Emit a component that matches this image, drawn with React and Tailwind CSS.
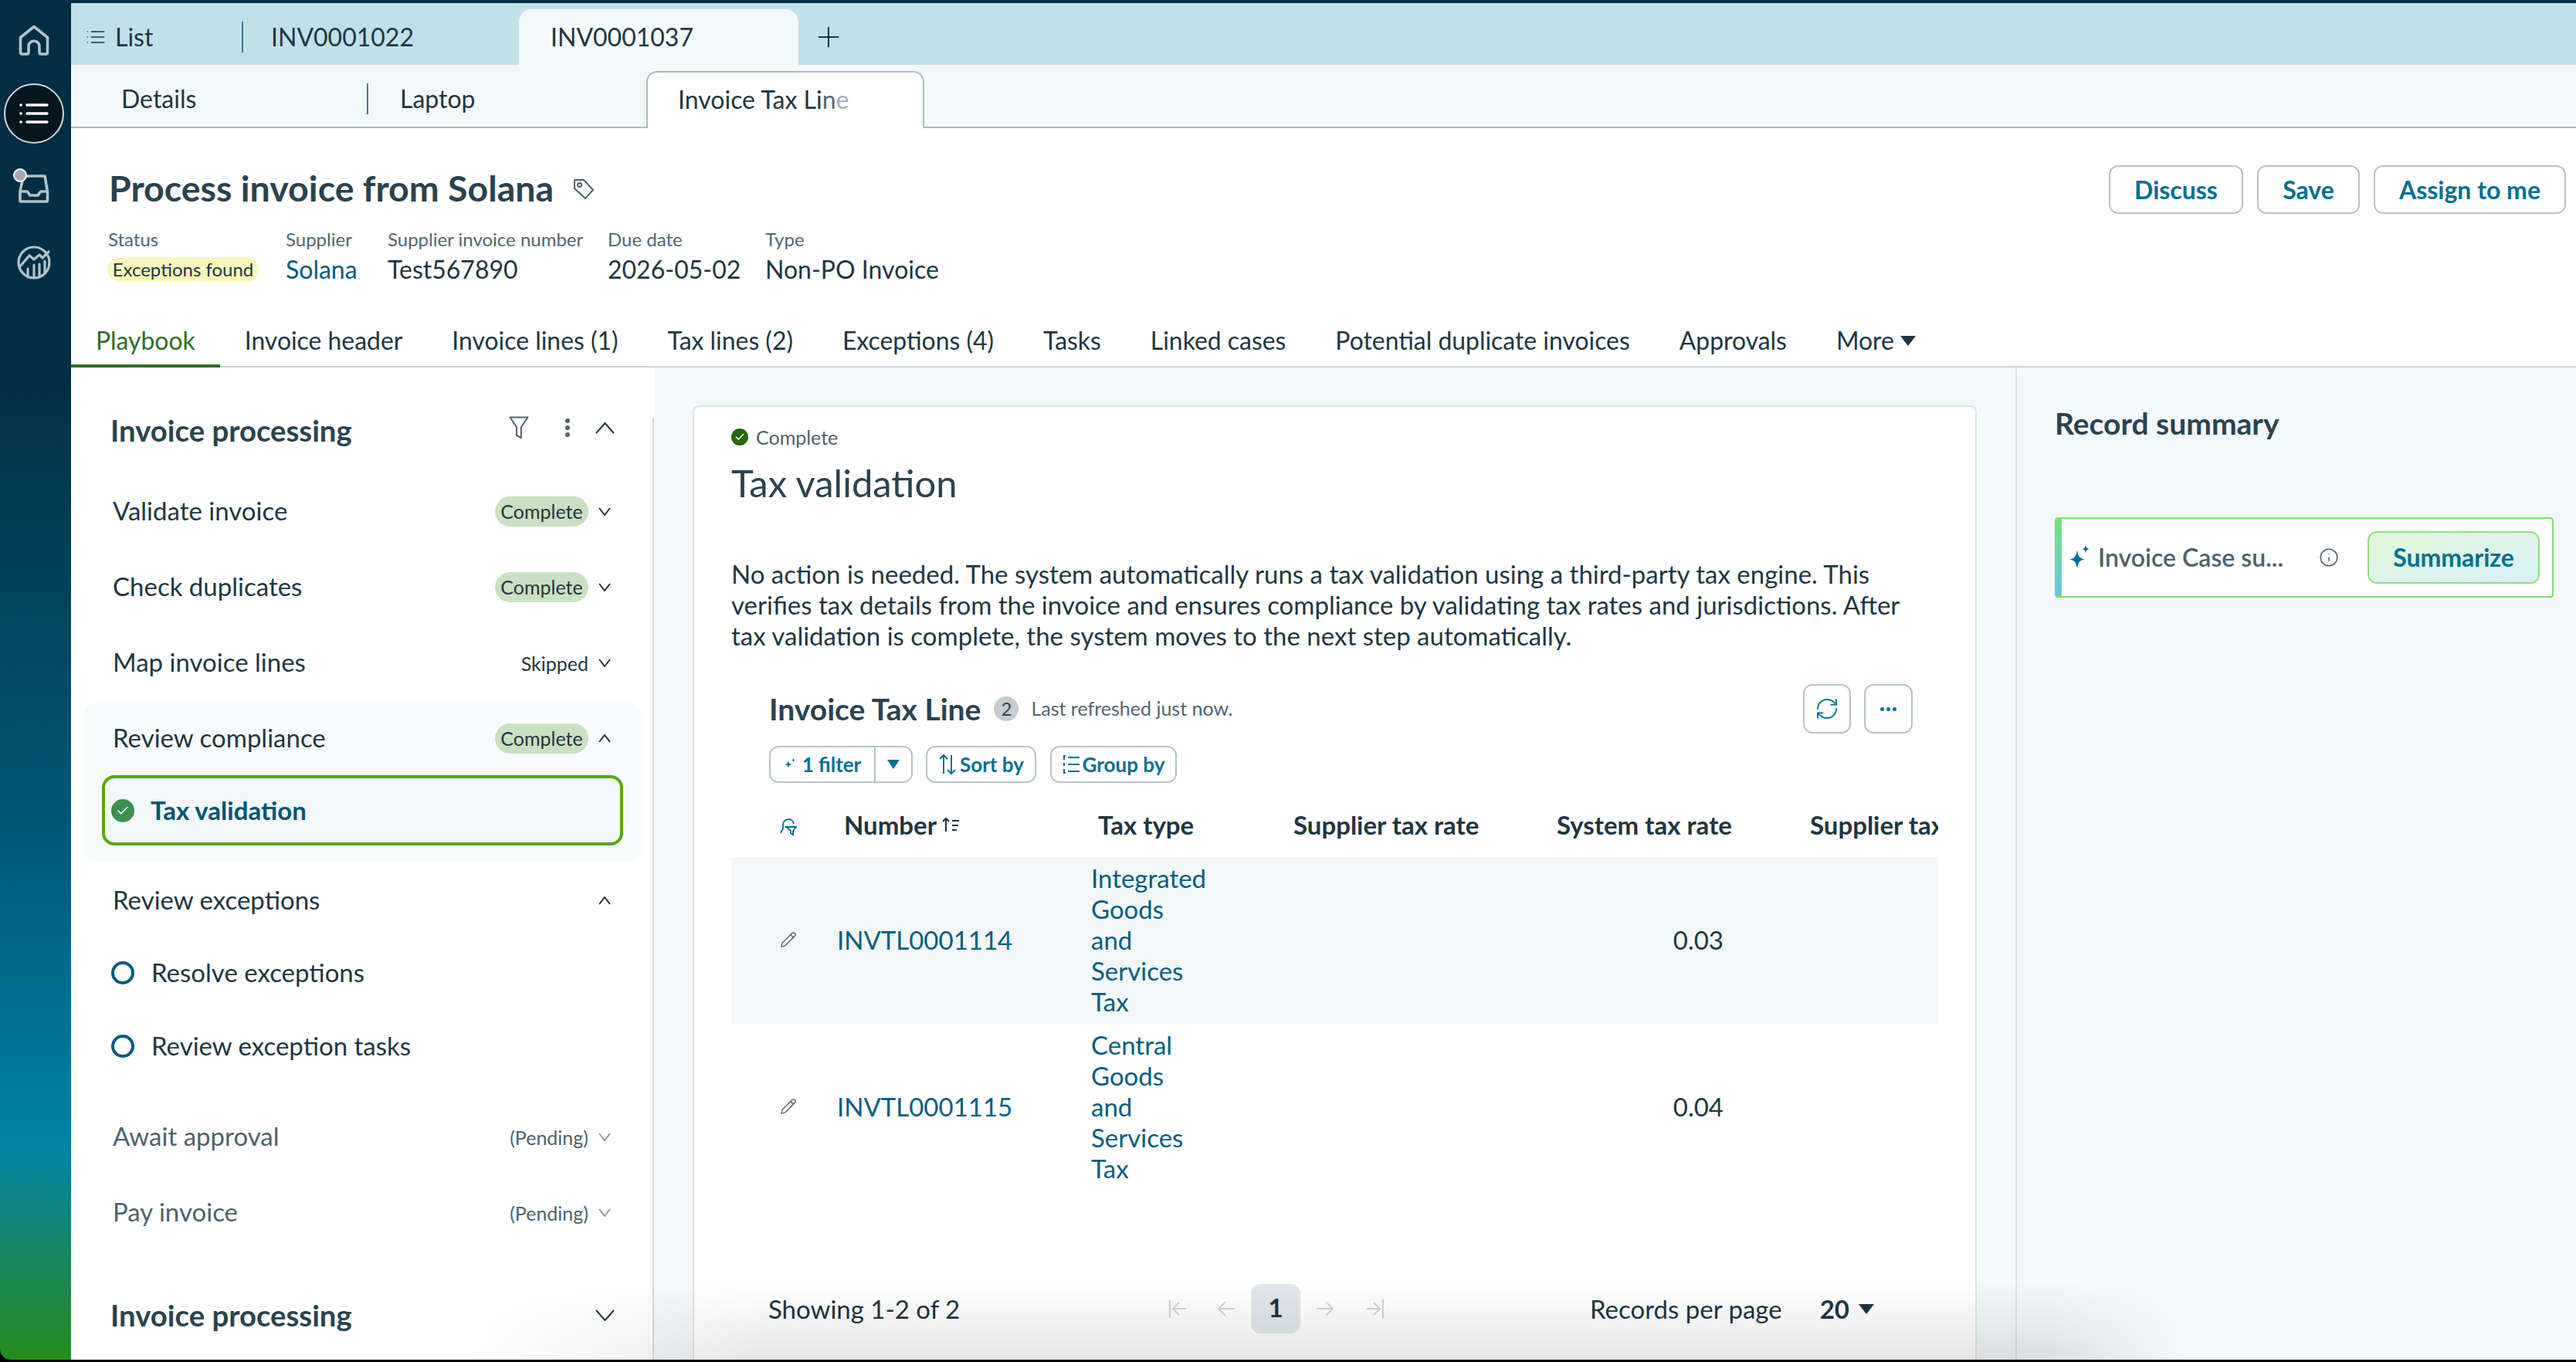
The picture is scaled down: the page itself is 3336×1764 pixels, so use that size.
import React from "react";
import { Plus, Check, RefreshCw, Info, Pencil } from "lucide-react";

const ICON = "#b3c3c8";

function HomeIcon() {
  return (
    <svg width="40" height="40" viewBox="0 0 40 40" fill="none" stroke={ICON} strokeWidth="3.6" strokeLinejoin="round">
      <path d="M2.500 16.500 20 2.500l17.500 14V36a2 2 0 0 1-2 2h-6.500a2 2 0 0 1-2-2v-8a7 7 0 0 0-14 0v8a2 2 0 0 1-2 2H4.500a2 2 0 0 1-2-2z" />
    </svg>
  );
}

function ListLines({ w = 38, h = 26, color = "white", sw = 3.6 }) {
  return (
    <svg width={w} height={h} viewBox="0 0 38 26" fill="none" stroke={color} strokeWidth={sw} strokeLinecap="round">
      <path d="M10 2h26M10 13h26M10 24h26" />
      <path d="M2 2h.1M2 13h.1M2 24h.1" />
    </svg>
  );
}

function InboxIcon() {
  return (
    <div className="relative w-[40px] h-[37px]">
      <svg width="40" height="37" viewBox="0 0 40 37" fill="none" stroke={ICON} strokeWidth="3.6" strokeLinejoin="round">
        <path d="M6 2h28l3.500 20v12a1 1 0 0 1-1 1H3a1 1 0 0 1-1-1V22z" />
        <path d="M2 22h9c2 0 2 5 5 5h8c3 0 3-5 5-5h9" />
      </svg>
      <div className="absolute -left-[7px] -top-[8px] w-[18px] h-[18px] rounded-full bg-[#a9a8b6] border-2 border-white" />
    </div>
  );
}

function ChartIcon() {
  return (
    <svg width="44" height="44" viewBox="0 0 44 44" fill="none" stroke={ICON} strokeWidth="3.200" strokeLinecap="round" strokeLinejoin="round">
      <circle cx="22" cy="22" r="20" />
      <path d="M4 27 16 13l6 5 7-6 4 4 8-8" />
      <path d="M14 41V30M22 42V25M29 41V24M36 35V20" />
    </svg>
  );
}

function Chevron({ up, big, color = "#1f3640" }) {
  const w = big ? 25 : 16;
  const h = big ? 15 : 11;
  return (
    <svg width={w} height={h} viewBox={`0 0 ${w} ${h}`} fill="none" stroke={color} strokeWidth="2">
      <path d={up ? `M1 ${h - 1}L${w / 2} 1L${w - 1} ${h - 1}` : `M1 1L${w / 2} ${h - 1}L${w - 1} 1`} />
    </svg>
  );
}

function Pill() {
  return (
    <span className="h-[39px] w-[121px] rounded-full bg-[#c9e1c1] text-[25px] leading-[39px] text-center text-[#1f3640]">
      Complete
    </span>
  );
}

function StepRow({ label, status, open, muted }) {
  return (
    <div className="h-[98px] flex items-center pl-[54px] pr-[56px]">
      <span className={`text-[33px] flex-1 ${muted ? "text-[#4e626b]" : "text-[#1f3640]"}`}>{label}</span>
      {status === "Complete" && <Pill />}
      {status && status !== "Complete" && (
        <span className={`text-[25px] mt-[4px] ${muted ? "text-[#4e626b]" : "text-[#1f3640]"}`}>{status}</span>
      )}
      <span className="w-[29px] flex justify-end">
        <Chevron up={open} color={muted ? "#8a9aa1" : "#1f3640"} />
      </span>
    </div>
  );
}

function Ring() {
  return <span className="w-[30px] h-[30px] rounded-full border-[4px] border-[#005a78] shrink-0" />;
}

function SmallBtn({ className, children }) {
  return (
    <div className={`h-[48px] rounded-[12px] border-2 border-[#b4c5cc] flex items-center justify-center gap-[4px] text-[26px] font-bold text-[#006f8f] ${className}`}>
      {children}
    </div>
  );
}

function Arrow({ kind }) {
  const d = {
    first: "M3 3v24M24 15H8M15 7l-8 8 8 8",
    prev: "M26 15H6M14 6l-9 9 9 9",
    next: "M4 15h20M16 6l9 9-9 9",
    last: "M27 3v24M6 15h16M15 7l8 8-8 8",
  };
  return (
    <svg width="30" height="30" viewBox="0 0 30 30" fill="none" stroke="#cdd5d8" strokeWidth="2">
      <path d={d[kind]} />
    </svg>
  );
}

export default function App() {
  const tabs = ["Invoice header", "Invoice lines (1)", "Tax lines (2)", "Exceptions (4)", "Tasks", "Linked cases", "Potential duplicate invoices", "Approvals"];
  const rows = [
    { id: "INVTL0001114", tax: "Integrated Goods and Services Tax", rate: "0.03", bg: "bg-[#f2f7f7]" },
    { id: "INVTL0001115", tax: "Central Goods and Services Tax", rate: "0.04", bg: "bg-white" },
  ];

  return (
    <div className="relative w-[3336px] h-[1764px] overflow-hidden bg-black flex font-['Lato',sans-serif] text-[32px] text-[#1f3640]">
      {/* left rail */}
      <div className="w-[92px] h-[1761px] rounded-bl-[14px] flex flex-col items-start pt-[32px] pl-[5px] bg-[linear-gradient(180deg,#032d42_0%,#032f44_27%,#005c78_63%,#0082a5_84%,#128578_90%,#268c1c_100%)]">
        <div className="ml-[19px]"><HomeIcon /></div>
        <div className="mt-[36px] w-[78px] h-[78px] rounded-full bg-[#05161f] border-2 border-[#d0d8db] flex items-center justify-center">
          <ListLines />
        </div>
        <div className="mt-[40px] ml-[19px]">
          <InboxIcon />
        </div>
        <div className="mt-[55px] ml-[17px]">
          <ChartIcon />
        </div>
      </div>

      {/* main */}
      <div className="w-[3244px] h-[1761px] flex flex-col pt-[4px] bg-[#032d42]">
        {/* window tabs */}
        <div className="h-[80px] bg-[#c2e0e8] pt-[8px] flex shrink-0">
          <div className="w-[223px] h-[72px] flex items-center pl-[20px]">
            <ListLines w={24} h={18} color="#1f3640" sw={2.4} />
            <span className="ml-[13px] flex-1">List</span>
            <span className="w-[2px] h-[40px] bg-[#2f7f9c]" />
          </div>
          <div className="w-[357px] h-[72px] flex items-center pl-[36px]">INV0001022</div>
          <div className="w-[362px] h-[72px] flex items-center pl-[41px] bg-[#f3f8f9] rounded-t-[16px]">INV0001037</div>
          <div className="h-[72px] flex items-center ml-[18px]">
            <Plus size={42} strokeWidth={1.2} />
          </div>
        </div>

        {/* record tabs */}
        <div className="h-[82px] bg-[#f3f8f9] border-b-2 border-[#a8bbc3] flex shrink-0">
          <div className="w-[385px] h-[80px] flex items-center pl-[65px] pt-[8px]">
            <span className="flex-1">Details</span>
            <span className="w-[2px] h-[40px] bg-[#2f7f9c]" />
          </div>
          <div className="w-[360px] h-[80px] flex items-center pl-[41px] pt-[8px]">Laptop</div>
          <div className="w-[360px] h-[74px] mt-[8px] bg-white border-x-2 border-t-2 border-[#a8bbc3] rounded-t-[14px] flex items-center pl-[39px] pb-[2px]">
            Invoice Tax Li<span className="text-[#566b74]">n</span><span className="text-[#a0aeb4]">e</span>
          </div>
        </div>

        {/* header */}
        <div className="h-[310px] bg-white flex flex-col shrink-0">
          <div className="flex justify-between pl-[49px] pr-[13px] pt-[48px]">
            <div className="flex items-center h-[63px] -mt-[2px]">
              <h1 className="text-[46.5px] font-bold text-[#2a434e]">Process invoice from Solana</h1>
              <svg className="ml-[24px] mt-[2px]" width="30" height="30" viewBox="0 0 30 30" fill="none" stroke="#4e626b" strokeWidth="2" strokeLinejoin="round">
                <path d="M3 3h12l12 13-10 11L3 14z" />
                <circle cx="9.500" cy="9.500" r="2.500" />
              </svg>
            </div>
            <div className="flex gap-[18px] text-[#006f8f] font-bold">
              <div className="h-[63px] w-[174px] rounded-[12px] border-2 border-[#b4c5cc] flex items-center justify-center">Discuss</div>
              <div className="h-[63px] w-[133px] rounded-[12px] border-2 border-[#b4c5cc] flex items-center justify-center">Save</div>
              <div className="h-[63px] w-[249px] rounded-[12px] border-2 border-[#b4c5cc] flex items-center justify-center">Assign to me</div>
            </div>
          </div>

          <div className="flex pl-[48px] mt-[18px]">
            <div className="w-[230px]">
              <div className="text-[24px] leading-[30px] text-[#51666f]">Status</div>
              <div className="h-[40px] mt-[4px] flex items-center">
                <span className="h-[32px] w-[196px] -ml-[1px] rounded-full bg-[#fbf6bd] text-[24px] leading-[32px] text-center">Exceptions found</span>
              </div>
            </div>
            <div className="w-[132px]">
              <div className="text-[24px] leading-[30px] text-[#51666f]">Supplier</div>
              <div className="leading-[40px] mt-[4px] text-[#005e7d]">Solana</div>
            </div>
            <div className="w-[285px]">
              <div className="text-[24px] leading-[30px] text-[#51666f]">Supplier invoice number</div>
              <div className="leading-[40px] mt-[4px]">Test567890</div>
            </div>
            <div className="w-[204px]">
              <div className="text-[24px] leading-[30px] text-[#51666f]">Due date</div>
              <div className="leading-[40px] mt-[4px]">2026-05-02</div>
            </div>
            <div>
              <div className="text-[24px] leading-[30px] text-[#51666f]">Type</div>
              <div className="leading-[40px] mt-[4px]">Non-PO Invoice</div>
            </div>
          </div>

          <div className="mt-auto flex h-[64px] border-b-2 border-[#c8d6dc] text-[31.900px]">
            <div className="h-[64px] px-[32px] pt-[9px] leading-[40px] text-[#2d6e24] border-b-4 border-[#2d6e24]">Playbook</div>
            {tabs.map((t) => (
              <div key={t} className="px-[32px] pt-[9px] leading-[40px]">{t}</div>
            ))}
            <div className="pl-[32px] pt-[9px] leading-[40px] flex items-start gap-[8px]">
              More
              <svg className="mt-[14px]" width="20" height="13" viewBox="0 0 20 13"><path d="M0 0h20L10 13z" fill="#1f3640" /></svg>
            </div>
          </div>
        </div>

        {/* body */}
        <div className="flex-1 flex min-h-0">
          {/* playbook */}
          <div className="relative w-[755px] bg-white shrink-0">
            <div className="absolute right-0 top-[64px] bottom-0 w-[2px] bg-[#d3dde2]" />
            <div className="pt-[57px] pl-[51px] pr-[51px] flex items-center">
              <h2 className="flex-1 text-[38.300px] leading-[48px] font-bold text-[#2a434e]">Invoice processing</h2>
              <svg className="-mt-[6px]" width="26" height="30" viewBox="0 0 26 30" fill="none" stroke="#4e626b" strokeWidth="2" strokeLinejoin="round">
                <path d="M1.500 1.500h23L16 14v14l-6-3V14z" />
              </svg>
              <svg className="ml-[46px] -mt-[6px]" width="8" height="26" viewBox="0 0 8 26" fill="#4e626b">
                <circle cx="4" cy="4" r="3" /><circle cx="4" cy="13" r="3" /><circle cx="4" cy="22" r="3" />
              </svg>
              <span className="ml-[32px] -mt-[6px]"><Chevron up big /></span>
            </div>
            <div className="mt-[32px]">
              <StepRow label="Validate invoice" status="Complete" />
              <StepRow label="Check duplicates" status="Complete" />
              <StepRow label="Map invoice lines" status="Skipped" />
            </div>
            <div className="mx-[16px] mt-[3px] h-[206px] rounded-[16px] bg-[#f8fbfc]">
              <div className="-mx-[16px] h-[92px] flex items-center pl-[54px] pr-[56px]">
                <span className="flex-1 text-[33px]">Review compliance</span>
                <Pill />
                <span className="w-[29px] flex justify-end">
                  <Chevron up />
                </span>
              </div>
              <div className="mx-[24px] mt-[2px] h-[91px] rounded-[16px] border-4 border-[#56a80a] bg-[#f2f7fa] flex items-center pl-[8px]">
                <span className="w-[30px] h-[30px] rounded-full bg-[#3f8f4f] flex items-center justify-center shrink-0">
                  <Check size={18} strokeWidth={2} className="text-white" />
                </span>
                <span className="ml-[21px] text-[33px] font-bold text-[#005570]">Tax validation</span>
              </div>
            </div>
            <div className="mt-[1px]">
              <StepRow label="Review exceptions" open />
            </div>
            <div className="h-[95px] -mt-[3px] flex items-center pl-[52px] text-[33px]">
              <Ring />
              <span className="ml-[22px]">Resolve exceptions</span>
            </div>
            <div className="h-[95px] flex items-center pl-[52px] text-[33px]">
              <Ring />
              <span className="ml-[22px]">Review exception tasks</span>
            </div>
            <div className="mt-[21px]">
              <StepRow label="Await approval" status="(Pending)" muted />
              <StepRow label="Pay invoice" status="(Pending)" muted />
            </div>
            <div className="mt-[60px] pl-[51px] pr-[51px] flex items-center">
              <h2 className="flex-1 text-[38.300px] leading-[48px] font-bold text-[#2a434e]">Invoice processing</h2>
              <Chevron big />
            </div>
          </div>

          {/* step content */}
          <div className="w-[1763px] shrink-0 bg-[#f3f8f9] px-[50px] pt-[49px] flex flex-col overflow-hidden">
            <div className="flex-1 bg-white border-2 border-b-0 border-[#dde5e8] rounded-t-[8px] pt-[23px] pl-[48px]">
              <div className="flex items-center h-[32px] text-[25px] leading-[32px] text-[#4e626b]">
                <span className="w-[22px] h-[22px] rounded-full bg-[#27650f] flex items-center justify-center mr-[10px]">
                  <Check size={14} strokeWidth={2.5} className="text-white" />
                </span>
                Complete
              </div>
              <h2 className="mt-[15px] text-[49px] leading-[56px] text-[#2a434e]">Tax validation</h2>
              <p className="mt-[70px] w-[1530px] text-[33px] leading-[40px]">
                No action is needed. The system automatically runs a tax validation using a third-party tax engine. This verifies tax details from the invoice and ensures compliance by validating tax rates and jurisdictions. After tax validation is complete, the system moves to the next step automatically.
              </p>

              <div className="mt-[43px] ml-[49px] w-[1481px] flex items-start">
                <div className="flex-1 h-[64px] flex items-center">
                  <h3 className="text-[39px] font-bold text-[#2a434e]">Invoice Tax Line</h3>
                  <span className="ml-[17px] w-[32px] h-[32px] rounded-full bg-[#c5cccf] text-[24px] leading-[32px] text-center text-[#2a434e]">2</span>
                  <span className="ml-[16px] text-[25px] text-[#51666f]">Last refreshed just now.</span>
                </div>
                <div className="w-[62px] h-[64px] rounded-[12px] border-2 border-[#b4c5cc] flex items-center justify-center">
                  <RefreshCw size={32} strokeWidth={1.4} className="text-[#006f8f]" />
                </div>
                <div className="ml-[17px] w-[63px] h-[64px] rounded-[12px] border-2 border-[#b4c5cc] flex items-center justify-center gap-[3px]">
                  <span className="w-[5px] h-[5px] rounded-full bg-[#006f8f]" />
                  <span className="w-[5px] h-[5px] rounded-full bg-[#006f8f]" />
                  <span className="w-[5px] h-[5px] rounded-full bg-[#006f8f]" />
                </div>
              </div>

              <div className="mt-[16px] ml-[49px] flex">
                <div className="h-[48px] w-[186px] rounded-[12px] border-2 border-[#b4c5cc] flex items-center text-[26px] font-bold text-[#006f8f]">
                  <span className="w-[136px] flex items-center justify-center gap-[8px] border-r-2 border-[#b4c5cc] h-full">
                    <svg width="16" height="20" viewBox="0 0 16 20" fill="#006f8f"><path d="M6 5c.6 3.500 1.500 4.400 5 5-3.500.6-4.400 1.500-5 5-.6-3.500-1.500-4.400-5-5 3.500-.6 4.400-1.500 5-5z" /><path d="M12.500 2c.3 1.700.7 2.200 2.500 2.500-1.800.3-2.200.8-2.500 2.500-.3-1.700-.7-2.200-2.500-2.500 1.800-.3 2.200-.8 2.500-2.500z" /></svg>
                    1 filter
                  </span>
                  <span className="flex-1 flex justify-center">
                    <svg width="16" height="12" viewBox="0 0 16 12"><path d="M0 0h16L8 12z" fill="#006f8f" /></svg>
                  </span>
                </div>
                <SmallBtn className="ml-[17px] w-[143px]">
                  <svg width="24" height="32" viewBox="0 0 24 32" fill="none" stroke="#006f8f" strokeWidth="2"><path d="M7 28V4M2 9l5-5 5 5M17 4v24M12 23l5 5 5-5" /></svg>
                  Sort by
                </SmallBtn>
                <SmallBtn className="ml-[18px] w-[164px]">
                  <svg width="22" height="26" viewBox="0 0 22 26" fill="none" stroke="#006f8f" strokeWidth="2"><path d="M7 4h15M7 13h15M7 22h15M4 2H2v5M2 11v4M2 19v5h2" /></svg>
                  Group by
                </SmallBtn>
              </div>

              {/* table */}
              <div className="w-[1563px] overflow-hidden text-[33px]">
                <div className="w-[1700px] h-[96px] pt-[34px] grid grid-cols-[128px_329px_246px_340px_330px_327px] font-bold leading-[40px]">
                  <div className="pl-[63px] pt-[11px]">
                    <svg width="22" height="24" viewBox="0 0 22 24" fill="none" stroke="#006f8f" strokeWidth="1.800"><path d="M11 2a7 7 0 0 0-7 7v5M11 2a7 7 0 0 1 7 6M4 14l-3 6M8 12h13l-4 5v5l-3-2v-3z" /></svg>
                  </div>
                  <div className="pl-[18px] h-[40px] flex items-center gap-[6px]">
                    Number
                    <svg width="24" height="22" viewBox="0 0 24 22" fill="none" stroke="#1f3640" strokeWidth="2"><path d="M6 20V3M2 7l4-4 4 4M14 6h9M14 12h8M14 18h6" /></svg>
                  </div>
                  <div className="pl-[18px]">Tax type</div>
                  <div className="pl-[25px]">Supplier tax rate</div>
                  <div className="pl-[26px]">System tax rate</div>
                  <div className="pl-[24px] whitespace-nowrap">Supplier tax rate</div>
                </div>
                {rows.map((r) => (
                  <div key={r.id} className={`w-[1700px] h-[216px] pb-[2px] grid grid-cols-[128px_329px_246px_340px_330px_327px] items-center leading-[40px] ${r.bg}`}>
                    <div className="pl-[63px]">
                      <Pencil size={22} strokeWidth={1.5} className="text-[#4e626b]" />
                    </div>
                    <div className="pl-[9px] text-[#005e7d]">{r.id}</div>
                    <div className="pl-[9px] text-[#005e7d] w-min">{r.tax}</div>
                    <div />
                    <div className="text-right pr-[88px]">{r.rate}</div>
                    <div />
                  </div>
                ))}
              </div>

              {/* pager */}
              <div className="mt-[121px] pl-[48px] h-[64px] flex items-center text-[33px]">
                <span className="w-[517px] pt-[2px]">Showing 1-2 of 2</span>
                <Arrow kind="first" />
                <span className="ml-[31px]"><Arrow kind="prev" /></span>
                <span className="ml-[17px] w-[64px] h-[64px] rounded-[12px] bg-[#e1e8ec] text-center leading-[60px] font-bold">1</span>
                <span className="ml-[17px]"><Arrow kind="next" /></span>
                <span className="ml-[33px]"><Arrow kind="last" /></span>
                <span className="ml-[265px] pt-[2px]">Records per page</span>
                <span className="ml-[49px] pt-[2px] font-bold">20</span>
                <svg className="ml-[12px]" width="20" height="13" viewBox="0 0 20 13"><path d="M0 0h20L10 13z" fill="#1f3640" /></svg>
              </div>
            </div>
          </div>

          {/* record summary */}
          <div className="flex-1 bg-[#f3f8fb] border-l-2 border-[#d8e2e7] pl-[49px] pt-[48px]">
            <h2 className="text-[39px] leading-[48px] font-bold text-[#2a434e]">Record summary</h2>
            <div className="mt-[98px] w-[646px] h-[104px] bg-white border-y-2 border-r-2 border-[#7be06e] rounded-[4px] flex items-center overflow-hidden">
              <div className="w-[9px] self-stretch bg-linear-to-b from-[#7be06e] to-[#6cc3e8]" />
              <svg className="ml-[9px]" width="28" height="36" viewBox="0 0 28 36" fill="#006f8f">
                <path d="M11 8c1.200 9 3 11 10 12.500-7 1.500-8.800 3.500-10 12.500-1.200-9-3-11-10-12.500C8 19 9.800 17 11 8z" />
                <path d="M22 1c.5 4 1.500 5.500 5 6-3.500.5-4.500 2-5 6-.5-4-1.500-5.500-5-6 3.500-.5 4.500-2 5-6z" />
              </svg>
              <span className="ml-[10px] w-[288px] text-[32px] font-semibold text-[#4e626b] whitespace-nowrap">Invoice Case su...</span>
              <Info size={26} strokeWidth={1.4} className="text-[#4e626b] -ml-[2px]" />
              <div className="ml-[37px] w-[223px] h-[68px] rounded-[12px] border-2 border-[#8ee27f] bg-linear-to-br from-[#dff9d6] to-[#daf0fa] flex items-center justify-center font-bold text-[#006f8f]">
                Summarize
              </div>
            </div>
          </div>
        </div>
      </div>

      {/* window shadow at the bottom edge */}
      <div className="absolute left-[600px] w-[2230px] bottom-[3px] h-[100px] pointer-events-none bg-linear-to-t from-black/10 to-transparent [mask-image:linear-gradient(to_right,transparent,black_400px,black_2050px,transparent)]" />
    </div>
  );
}
